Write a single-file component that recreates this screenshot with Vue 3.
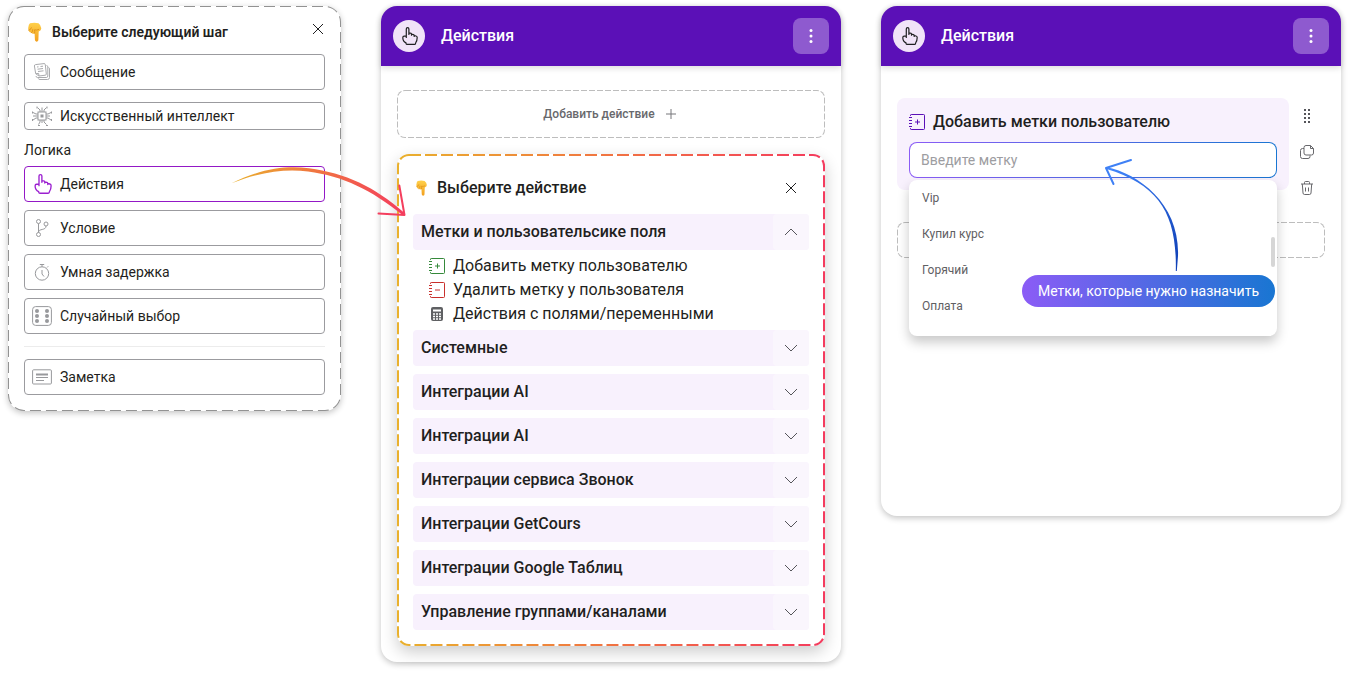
<script setup>
import { ref } from 'vue'

const logicSteps = [
  { id: 'actions', label: 'Действия', active: true },
  { id: 'condition', label: 'Условие' },
  { id: 'delay', label: 'Умная задержка' },
  { id: 'random', label: 'Случайный выбор' },
]

const openItems = [
  { id: 'insert', label: 'Добавить метку пользователю' },
  { id: 'remove', label: 'Удалить метку у пользователя' },
  { id: 'fields', label: 'Действия с полями/переменными' },
]

const groups = [
  'Системные',
  'Интеграции AI',
  'Интеграции AI',
  'Интеграции сервиса Звонок',
  'Интеграции GetCours',
  'Интеграции Google Таблиц',
  'Управление группами/каналами',
]

const tags = ['Vip', 'Купил курс', 'Горячий', 'Оплата']
const tag = ref('')
</script>

<template>
  <svg class="defs" aria-hidden="true">
    <defs>
      <linearGradient id="warm" x1="0" x2="1" y1="0" y2="0">
        <stop offset="0" stop-color="#e9b12d" />
        <stop offset="0.45" stop-color="#f0793f" />
        <stop offset="1" stop-color="#f43b5e" />
      </linearGradient>
      <linearGradient id="blue" x1="0" x2="1" y1="0" y2="1">
        <stop offset="0" stop-color="#4388ff" />
        <stop offset="1" stop-color="#0f3fb5" />
      </linearGradient>
      <linearGradient id="skin" x1="0" x2="0" y1="0" y2="1">
        <stop offset="0" stop-color="#ffd04a" />
        <stop offset="1" stop-color="#f2a01f" />
      </linearGradient>
      <symbol id="hand" viewBox="0 1 18 18">
        <path d="M6.300 11.500V2.900a1.300 1.300 0 0 1 2.600 0v5.600M8.900 8.300V6.900l1.700.3a1 1 0 0 1 .9 1v1M11.500 8.200l1.900.4a1 1 0 0 1 .8 1v.9M14.200 9.500l1.800.5a1.600 1.600 0 0 1 1.200 1.500c0 2.500-.2 3.600-1.600 5.500v.3a1.200 1.200 0 0 1-1.200 1H7.200a1.200 1.200 0 0 1-1.200-1v-.4C3.700 15.800 2.800 14 2.800 11.800c0-1 .5-1.600 1.300-1.600H6.300" fill="none" stroke="currentColor" stroke-width="1.200" stroke-linecap="round" stroke-linejoin="round" />
      </symbol>
      <symbol id="point" viewBox="0 0 20 20">
        <path d="M6 1.300Q10 .2 14.500 1.200Q17 3 17.300 6.200Q17.400 8.600 14.700 9.500L14.400 17.600C14.400 20.300 11 20.300 10.900 17.600L10.600 11.200Q8.800 12.600 7.300 10.800Q4.800 10.600 4.700 8.300Q3.900 7 4.400 5Q4.600 2.200 6 1.300Z" fill="url(#skin)" />
        <path d="M4.700 8.300Q6.800 8 7.400 5.800M7.300 10.800Q9 10 8.800 7.600M10.600 11.200Q11 9.500 10.500 7.800Q12.500 8.500 14.700 7.500" fill="none" stroke="#d98c17" stroke-width=".8" stroke-linecap="round" />
      </symbol>
      <symbol id="notebook" viewBox="0 0 16 16">
        <path d="M1.500 2V1.200Q1.500.5 2.200.5h12.300q1 0 1 .7v13.500q0 .8-1 .8H2.200q-.7 0-.7-.7V14" fill="none" stroke="currentColor" />
        <path d="M0 3.500h3M0 6.500h3M0 9.500h3M0 12.500h3" stroke="currentColor" fill="none" />
      </symbol>
      <symbol id="close" viewBox="0 0 14 14">
        <path d="M2 2l10 10M12 2L2 12" stroke="currentColor" fill="none" />
      </symbol>
    </defs>
  </svg>

  <main class="board">
    <section class="panel steps">
      <svg class="outline" aria-hidden="true"><rect width="100%" height="100%" rx="16" /></svg>
      <header class="steps-head">
        <svg class="point" aria-hidden="true"><use href="#point" /></svg>
        <h2>Выберите следующий шаг</h2>
        <button class="close" aria-label="Закрыть"><svg><use href="#close" /></svg></button>
      </header>

      <button class="step">
        <svg class="ico thin" viewBox="0 0 20 20">
          <path d="M3.500 2.600l8.500-1q1.200-.1 1.300 1L14.300 12q0 1.100-1 1.200l-6.300.8-3.300-2.300L2.400 4q-.1-1.200 1.100-1.400ZM3.900 11.700l2.700-.3.400 2.600M14.500 3.500q1.300.1 1.300 1.400V14q0 1.500-1.500 1.500H5.500q-1.300 0-1.500-1.400M16.500 5.500q1 .2 1 1.400v8.600q0 2-2 2H8q-1.500 0-1.800-1.200" />
          <path d="M5 5l1.500-.2M8.500 4.500l2.500-.3M5.500 7.200l5.500-.7M6 9.500l5.500-.7" />
        </svg>
        <span>Сообщение</span>
      </button>
      <button class="step compact">
        <svg class="ico" viewBox="0 0 20 20">
          <rect x="6" y="6" width="8" height="8" />
          <rect class="solid" x="8.500" y="8.500" width="3" height="3" />
          <path d="M8 6V4L5.500 1.500M10 6V1.500M12 6V4l2.500-2.500M8 14v2l-1.500 2.500M10 14v3M12 14v2l2.500 2.500M6 8H4L1 6.500M6 10H1M6 12H4l-3 2M14 8h2l3-1.500M14 10h4M14 12h2l3 2" />
          <path d="M5 .5v2M15 .5v2M.5 5.500v2M.5 13v2M19.500 5.500v2M19.500 13v2M6 19.500h2M14 19.500h2" />
        </svg>
        <span>Искусственный интеллект</span>
      </button>

      <h3>Логика</h3>
      <div class="logic">
        <div v-for="s in logicSteps" :key="s.id" class="slot">
          <button class="step" :class="{ active: s.active }">
            <svg v-if="s.id === 'actions'" class="ico hand"><use href="#hand" /></svg>
            <svg v-else-if="s.id === 'condition'" class="ico" viewBox="0 0 20 20">
              <circle cx="6.500" cy="3.500" r="2" /><circle cx="6.500" cy="16.500" r="2" /><circle cx="14" cy="6" r="2" />
              <path d="M6.500 5.500v9M14 8c0 5-7.500 2-7.500 6.500" />
            </svg>
            <svg v-else-if="s.id === 'delay'" class="ico" viewBox="0 0 20 20">
              <circle cx="10" cy="11.500" r="6.700" /><path d="M7.800 2.500h4.400M10 2.500v2.300M15 5.500l1.200-1.200M10 8v4l2 2.500" />
            </svg>
            <svg v-else class="ico" viewBox="0 0 20 20">
              <rect x=".6" y=".6" width="18.800" height="18.800" rx="3" />
              <g class="solid"><circle cx="5" cy="5" r="2" /><circle cx="5" cy="10" r="2" /><circle cx="5" cy="15" r="2" /><circle cx="15" cy="5" r="2" /><circle cx="15" cy="10" r="2" /><circle cx="15" cy="15" r="2" /></g>
            </svg>
            <span>{{ s.label }}</span>
          </button>
          <svg v-if="s.active" class="arrow-next" viewBox="226 160 184 62" aria-hidden="true">
            <path d="M231.500 183.300C262 168 287 165.500 309 168.300C345 173 375 187 404.500 213L402.500 215C372 190 343 176 308 171.400C287 168.700 262 171 231.500 183.300Z" fill="url(#warm)" />
            <path d="M399.300 185.500L404.500 215L378.500 213.500" fill="none" stroke="#f43f5e" stroke-width="2" stroke-linecap="round" stroke-linejoin="round" />
          </svg>
        </div>
      </div>
      <hr>
      <button class="step">
        <svg class="ico" viewBox="0 0 20 20">
          <rect x=".6" y="2.800" width="18.800" height="14.200" rx="1" /><path class="thick" d="M4 7.500h12" /><path d="M4 10.500h12M4 13.500h8" />
        </svg>
        <span>Заметка</span>
      </button>
    </section>

    <section class="panel card">
      <header class="bar">
        <span class="badge"><svg><use href="#hand" /></svg></span>
        <h2>Действия</h2>
        <button class="more" aria-label="Меню"><svg viewBox="0 0 16 16"><circle cx="8" cy="2.500" r="1.500" /><circle cx="8" cy="8" r="1.500" /><circle cx="8" cy="13.500" r="1.500" /></svg></button>
      </header>
      <div class="body">
        <button class="add">
          <svg class="outline fine" aria-hidden="true"><rect width="100%" height="100%" rx="8" /></svg>
          <span>Добавить действие</span>
          <svg class="plus" viewBox="0 0 12 12"><path d="M6 1v10M1 6h10" /></svg>
        </button>

        <div class="picker">
          <svg class="outline warm" aria-hidden="true"><rect width="100%" height="100%" rx="12" /></svg>
          <header class="picker-head">
            <svg class="point small" aria-hidden="true"><use href="#point" /></svg>
            <h3>Выберите действие</h3>
            <button class="close wide" aria-label="Закрыть"><svg><use href="#close" /></svg></button>
          </header>
          <button class="group" aria-expanded="true">
            <span>Метки и пользовательсике поля</span>
            <i><svg viewBox="0 0 16 16"><path d="M2 11l6-6 6 6" /></svg></i>
          </button>
          <ul>
            <li v-for="item in openItems" :key="item.id">
              <a href="#">
                <svg v-if="item.id === 'fields'" viewBox="0 0 16 16">
                  <rect x="2" y="1" width="12" height="14" rx="2" fill="#5f6063" />
                  <path d="M4 4.500h8" stroke="#fff" stroke-width="2" />
                  <path d="M4 8h8M4 10.500h8M4 13h8" stroke="#fff" stroke-width="1.500" stroke-dasharray="2 1" />
                </svg>
                <svg v-else :class="item.id" viewBox="0 0 16 16">
                  <use href="#notebook" />
                  <path :d="item.id === 'insert' ? 'M6 8h5M8.500 5.500v5' : 'M6 8h5'" fill="none" stroke="currentColor" />
                </svg>
                <span>{{ item.label }}</span>
              </a>
            </li>
          </ul>
          <div class="groups">
            <button v-for="(g, i) in groups" :key="i" class="group" aria-expanded="false">
              <span>{{ g }}</span>
              <i><svg viewBox="0 0 16 16"><path d="M2 5l6 6 6-6" /></svg></i>
            </button>
          </div>
        </div>
      </div>
    </section>

    <section class="panel card editor">
      <header class="bar">
        <span class="badge"><svg><use href="#hand" /></svg></span>
        <h2>Действия</h2>
        <button class="more" aria-label="Меню"><svg viewBox="0 0 16 16"><circle cx="8" cy="2.500" r="1.500" /><circle cx="8" cy="8" r="1.500" /><circle cx="8" cy="13.500" r="1.500" /></svg></button>
      </header>
      <div class="body">
        <div class="row">
          <div class="block">
            <label for="tag">
              <svg class="tagico" viewBox="0 0 16 16"><use href="#notebook" /><path d="M6 8h5M8.500 5.500v5" fill="none" stroke="currentColor" /></svg>
              <span>Добавить метки пользователю</span>
            </label>
            <div class="field">
              <input id="tag" v-model="tag" type="text" placeholder="Введите метку">
              <div class="menu">
                <button v-for="t in tags" :key="t">{{ t }}</button>
                <span class="thumb"></span>
                <span class="hint">Метки, которые нужно назначить</span>
              </div>
              <svg class="arrow-field" viewBox="1100 155 84 120" aria-hidden="true">
                <path d="M1106 167C1140 174 1180 205 1178 256L1176.800 271L1175.800 271C1177 215 1160 185 1106.500 169Z" fill="url(#blue)" />
                <path d="M1131 160L1106 168L1113.500 184" fill="none" stroke="#3f80f5" stroke-width="2" stroke-linecap="round" stroke-linejoin="round" />
              </svg>
            </div>
          </div>
          <div class="tools">
            <button aria-label="Переместить"><svg viewBox="0 0 16 16"><path class="dots" d="M5 1h2v2H5zM9 1h2v2H9zM5 5h2v2H5zM9 5h2v2H9zM5 9h2v2H5zM9 9h2v2H9zM5 13h2v2H5zM9 13h2v2H9z" /></svg></button>
            <button aria-label="Копировать"><svg viewBox="0 0 16 16"><path d="M7 1.500h4.500l3 3v4.500q0 2-2 2H7q-2 0-2-2V3.500q0-2 2-2ZM11.500 1.500v3h3M5 4.500H3.500q-2 0-2 2v6q0 2 2 2h5.500q2 0 2-2V11.500" /></svg></button>
            <button aria-label="Удалить"><svg viewBox="0 0 16 16"><path d="M2 4h12M5.500 4V2.500q0-1 1-1h3q1 0 1 1V4M3.300 4l.7 9q.1 1.500 1.600 1.500h4.800q1.500 0 1.600-1.500l.7-9M6.500 7.500v4M9.500 7.500v4" /></svg></button>
          </div>
        </div>
        <div class="drop"><svg class="outline fine" aria-hidden="true"><rect width="100%" height="100%" rx="8" /></svg></div>
      </div>
    </section>
  </main>
</template>

<style>
body {
  background: #fff;
}
</style>

<style scoped>
* {
  box-sizing: border-box;
}
.defs {
  position: absolute;
  width: 0;
  height: 0;
}
.board {
  display: grid;
  grid-template-columns: 333fr 460fr 460fr;
  gap: 40px;
  align-items: start;
  padding: 6px 8px 10px;
  font-family: Roboto, "Liberation Sans", sans-serif;
  color: #1f1f21;
}
h2, h3, ul {
  margin: 0;
  padding: 0;
}
button {
  font: inherit;
  color: inherit;
  border: 0;
  padding: 0;
  background: none;
  cursor: pointer;
}
svg {
  display: block;
  flex: none;
}
.panel {
  position: relative;
  border-radius: 16px;
  background: #fff;
  box-shadow: 0 2px 6px rgba(0, 0, 0, 0.24);
}
.outline {
  position: absolute;
  inset: 0;
  width: 100%;
  height: 100%;
  border-radius: 16px;
  overflow: hidden;
  pointer-events: none;
}
.outline rect {
  fill: none;
  stroke: #929292;
  stroke-width: 2;
  stroke-dasharray: 11 5;
}
.outline.fine {
  border-radius: 8px;
}
.outline.fine rect {
  stroke: #bdbdbd;
  stroke-dasharray: 6 2;
}
.outline.warm {
  border-radius: 12px;
}
.outline.warm rect {
  stroke: url(#warm);
  stroke-width: 4;
  stroke-dasharray: 12 4;
}

.steps {
  z-index: 1;
  display: flex;
  flex-direction: column;
  padding: 16px;
}
.steps-head {
  display: flex;
  align-items: center;
  gap: 8px;
  height: 20px;
  margin-bottom: 12px;
}
.steps-head h2 {
  flex: 1;
  font-size: 14px;
  font-weight: 600;
}
.point {
  width: 20px;
  height: 20px;
}
.point.small {
  width: 16px;
  height: 16px;
}
.close {
  align-self: flex-start;
}
.close svg {
  width: 14px;
  height: 14px;
}
.close.wide {
  align-self: center;
  display: grid;
  place-items: center;
  width: 36px;
  height: 36px;
}
.step {
  display: flex;
  align-items: center;
  gap: 8px;
  width: 100%;
  height: 36px;
  padding: 0 7px;
  border: 1px solid #9b9b9f;
  border-radius: 4px;
  background: #fff;
  font-size: 14px;
  text-align: left;
}
.step.compact {
  height: 28px;
  margin-top: 12px;
}
.step.active {
  border-color: #9318c6;
}
.ico {
  width: 20px;
  height: 20px;
  fill: none;
  stroke: #98999c;
  color: #9b1fd0;
}
.ico.thin {
  stroke: #a9aaad;
}
.ico.hand {
  stroke: none;
}
.ico .solid {
  fill: #98999c;
  stroke: none;
}
.ico .thick {
  stroke-width: 2;
}
.steps h3 {
  margin: 12px 0 8px;
  font-size: 14px;
  line-height: 16px;
  font-weight: 400;
}
.logic {
  display: flex;
  flex-direction: column;
  gap: 8px;
}
.slot {
  position: relative;
}
.arrow-next {
  position: absolute;
  z-index: 2;
  top: -6px;
  right: -85px;
  width: 184px;
  height: 62px;
  pointer-events: none;
}
.steps hr {
  width: 100%;
  margin: 12px 0;
  border: 0;
  border-top: 1px solid #ececec;
}

.bar {
  display: flex;
  align-items: center;
  gap: 16px;
  height: 60px;
  padding: 0 12px;
  border-radius: 16px 16px 0 0;
  background: #5b10b7;
  color: #fff;
  box-shadow: 0 2px 6px rgba(0, 0, 0, 0.14);
}
.bar h2 {
  flex: 1;
  padding-bottom: 2px;
  font-size: 16px;
  font-weight: 500;
}
.badge {
  display: grid;
  place-items: center;
  width: 32px;
  height: 32px;
  border-radius: 50%;
  background: #f1e3f8;
  color: #1f1f21;
}
.badge svg {
  width: 18px;
  height: 18px;
}
.more {
  display: grid;
  place-items: center;
  width: 36px;
  height: 36px;
  border-radius: 8px;
  background: #8e5acf;
}
.more svg {
  width: 16px;
  height: 16px;
  fill: #fff;
}
.body {
  padding: 24px 16px 16px;
}
.add {
  position: relative;
  display: flex;
  align-items: center;
  justify-content: center;
  gap: 10px;
  width: 100%;
  height: 48px;
  padding-right: 2px;
  font-size: 12px;
  font-weight: 500;
  color: #68686c;
}
.plus {
  width: 12px;
  height: 12px;
  stroke: #77777b;
}
.picker {
  position: relative;
  margin-top: 16px;
  padding: 16px;
  border-radius: 12px;
  background: #fff;
  box-shadow: 0 6px 16px rgba(0, 0, 0, 0.2);
}
.picker-head {
  display: flex;
  align-items: center;
  gap: 8px;
  margin-bottom: 8px;
}
.picker-head h3 {
  flex: 1;
  padding-bottom: 2px;
  font-size: 16px;
  font-weight: 500;
}
.group {
  display: flex;
  align-items: center;
  justify-content: space-between;
  width: 100%;
  height: 36px;
  padding-left: 8px;
  border-radius: 4px;
  background: #f8f1fd;
  font-size: 16px;
  font-weight: 500;
  text-align: left;
}
.group span, li span, .block label span {
  padding-bottom: 2px;
}
.group i {
  display: grid;
  place-items: center;
  width: 36px;
  height: 36px;
  border-radius: 4px;
  background: #faf6fd;
}
.group svg {
  width: 16px;
  height: 16px;
  fill: none;
  stroke: #55555a;
}
.groups {
  display: flex;
  flex-direction: column;
  gap: 8px;
}
ul {
  margin: 4px 0;
  list-style: none;
}
li a {
  display: flex;
  align-items: center;
  gap: 8px;
  height: 24px;
  padding-left: 16px;
  font-size: 16px;
  color: inherit;
  text-decoration: none;
}
li svg, .tagico {
  width: 16px;
  height: 16px;
}
.insert {
  color: #35893a;
}
.remove {
  color: #c9302c;
}

.editor {
  min-height: 510px;
}
.editor .body {
  padding-top: 32px;
}
.row {
  display: flex;
  align-items: flex-start;
}
.block {
  flex: 1;
  padding: 12px;
  border-radius: 8px;
  background: #f8f1fd;
}
.block label {
  display: flex;
  align-items: center;
  gap: 8px;
  height: 24px;
  margin-bottom: 8px;
  font-size: 16px;
  font-weight: 500;
}
.tagico {
  color: #5b10b7;
}
.field {
  position: relative;
}
.field input {
  display: block;
  width: 100%;
  height: 36px;
  padding: 0 11px;
  border: 1px solid transparent;
  border-radius: 8px;
  background: linear-gradient(#fff, #fff) padding-box, linear-gradient(90deg, #8b5cf6, #1976d2) border-box;
  font: 14px Roboto, "Liberation Sans", sans-serif;
  outline: 0;
}
.field input::placeholder {
  color: #9d9da1;
  opacity: 1;
}
.menu {
  position: absolute;
  z-index: 1;
  top: 38px;
  left: 0;
  right: 0;
  padding-bottom: 12px;
  border-radius: 8px;
  background: #fff;
  box-shadow: 0 6px 12px rgba(0, 0, 0, 0.22);
}
.menu button {
  display: block;
  width: 100%;
  height: 36px;
  padding: 0 13px;
  font-size: 12px;
  color: #5f6063;
  text-align: left;
}
.thumb {
  position: absolute;
  top: 57px;
  right: 2px;
  width: 4px;
  height: 30px;
  border-radius: 2px;
  background: #d6d6d6;
}
.hint {
  position: absolute;
  top: 95px;
  right: 2px;
  padding: 0 16px;
  border-radius: 16px;
  background: linear-gradient(90deg, #8b5cf6, #1976d2);
  font-size: 14px;
  line-height: 32px;
  color: #fff;
  white-space: nowrap;
}
.arrow-field {
  position: absolute;
  z-index: 2;
  top: 13px;
  right: 93px;
  width: 84px;
  height: 120px;
  pointer-events: none;
}
.tools button {
  display: grid;
  place-items: center;
  width: 36px;
  height: 36px;
}
.tools svg {
  width: 16px;
  height: 16px;
  fill: none;
  stroke: #68686c;
}
.tools .dots {
  fill: #55555a;
  stroke: none;
}
.drop {
  position: relative;
  height: 36px;
  margin-top: 16px;
}
</style>
